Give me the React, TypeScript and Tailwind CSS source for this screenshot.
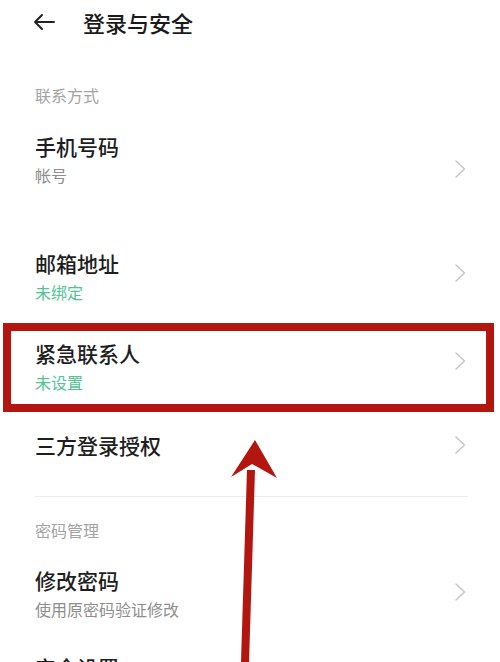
const FONT = { fontFamily: '"Noto Sans CJK SC", "Noto Sans", sans-serif' };

function Chevron({ className = '' }: { className?: string }) {
  return (
    <svg width="12" height="20" viewBox="0 0 12 20" className={`shrink-0 -my-[4px] ${className}`}>
      <path d="M2 2L10.5 10L2 18" fill="none" stroke="#c6c6c6" strokeWidth="1.6" strokeLinecap="round" strokeLinejoin="round" />
    </svg>
  );
}

function Row({
  title,
  sub,
  subColor = 'text-[#8e8e8e]',
  className = '',
  chevronClass = '',
}: {
  title: string;
  sub?: string;
  subColor?: string;
  className?: string;
  chevronClass?: string;
}) {
  return (
    <div className={`flex items-center justify-between pr-[34px] ${className}`}>
      <div className="flex flex-col">
        <span className="text-[21px] leading-[24px] font-medium text-[#1e1e1e]">{title}</span>
        {sub && <span className={`text-[16px] leading-[20px] mt-[7px] ${subColor}`}>{sub}</span>}
      </div>
      <Chevron className={chevronClass} />
    </div>
  );
}

export default function App() {
  return (
    <div className="relative w-[500px] h-[662px] overflow-hidden bg-white pl-[35px]" style={FONT}>
      {/* Header */}
      <div className="flex items-center h-[44px] -ml-[3px]">
        <svg width="24" height="18" viewBox="0 0 24 18" className="shrink-0">
          <path d="M22 9H3M10 2L3 9l7 7" fill="none" stroke="#222" strokeWidth="2" strokeLinecap="round" strokeLinejoin="round" />
        </svg>
        <span className="ml-[27px] text-[22px] font-medium text-[#1a1a1a]">登录与安全</span>
      </div>

      {/* Contact */}
      <p className="mt-[41px] text-[16px] leading-[20px] text-[#a3a3a3]">联系方式</p>
      <Row title="手机号码" sub="帐号" className="mt-[29px]" chevronClass="translate-y-[9px]" />
      <Row title="邮箱地址" sub="未绑定" subColor="text-[#4fc392]" className="mt-[66px]" chevronClass="-translate-y-[4px]" />
      <Row title="紧急联系人" sub="未设置" subColor="text-[#4fc392]" className="mt-[39px]" chevronClass="-translate-y-[6px]" />
      <Row title="三方登录授权" className="mt-[41px]" />

      <div className="mt-[39px] mr-[32px] border-t border-[#ebebeb]" />

      {/* Password */}
      <p className="mt-[23px] text-[16px] leading-[20px] text-[#a3a3a3]">密码管理</p>
      <Row title="修改密码" sub="使用原密码验证修改" className="mt-[28px]" chevronClass="-translate-y-[2px]" />
      <p className="mt-[36px] text-[21px] leading-[24px] font-medium text-[#1e1e1e]">安全设置</p>

      {/* Annotation box */}
      <div className="absolute left-[3px] top-[323px] w-[491px] h-[89px] border-[8px] border-[#b3160f] pointer-events-none" />

      {/* Annotation arrow */}
      <svg className="absolute left-0 top-0 pointer-events-none" width="500" height="662" viewBox="0 0 500 662">
        <path d="M251 470 L245 662" stroke="#b3160f" strokeWidth="8" fill="none" />
        <path d="M255 440 L277 478 L252 464 L231 477 Z" fill="#b3160f" />
      </svg>
    </div>
  );
}
